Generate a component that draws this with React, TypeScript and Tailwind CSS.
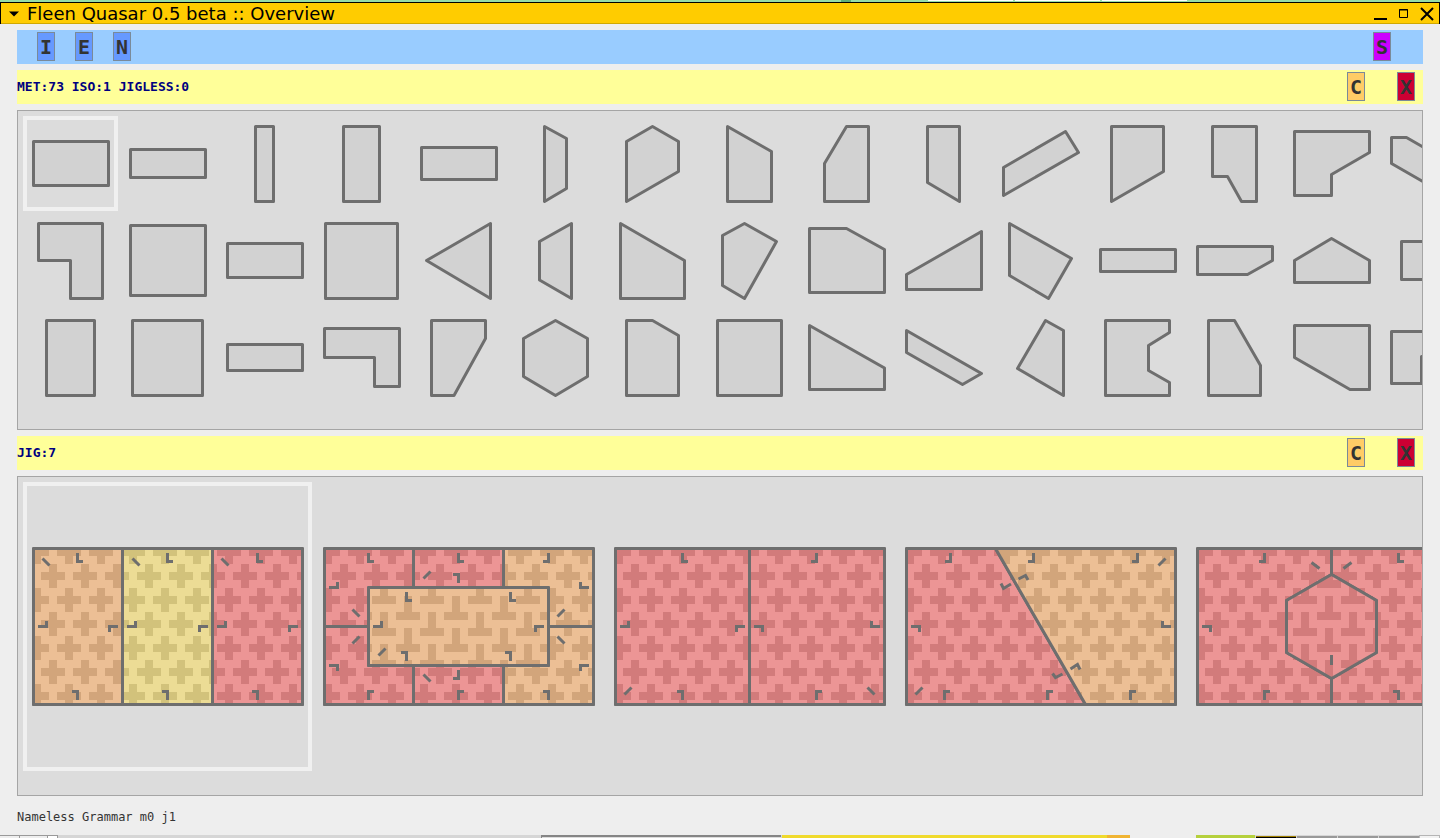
import { useState } from "react";
import type { ReactNode } from "react";

const METAGONS: string[] = [
  // first row
  "10.5,25.5 85.5,25.5 85.5,69.5 10.5,69.5",
  "10.5,33.5 85.5,33.5 85.5,61.5 10.5,61.5",
  "38.5,10.5 56.5,10.5 56.5,85.5 38.5,85.5",
  "29.5,10.5 65.5,10.5 65.5,85.5 29.5,85.5",
  "10.5,31.5 85.5,31.5 85.5,63.5 10.5,63.5",
  "36.5,10.5 58.5,22.5 58.5,72.5 36.5,85.5",
  "47.5,10.5 73.5,25.5 73.5,55.5 21.5,85.5 21.5,25.5",
  "25.5,10.5 69.5,35.5 69.5,85.5 25.5,85.5",
  "47.5,10.5 69.5,10.5 69.5,85.5 25.5,85.5 25.5,47.5",
  "31.5,10.5 63.5,10.5 63.5,85.5 31.5,66.5",
  "10.5,51.5 72.5,15.5 85.5,36.5 10.5,79.5",
  "21.5,10.5 73.5,10.5 73.5,55.5 21.5,85.5",
  "25.5,10.5 69.5,10.5 69.5,85.5 54.5,85.5 40.5,60.5 25.5,60.5",
  "10.5,15.5 85.5,15.5 85.5,36.5 47.5,58.5 47.5,79.5 10.5,79.5",
  "10.5,21.5 25.5,21.5 85.5,56 70.5,82 10.5,47.5",
  // second row
  "15.5,10.5 79.5,10.5 79.5,85.5 47.5,85.5 47.5,47.5 15.5,47.5",
  "10.5,12.5 85.5,12.5 85.5,82.5 10.5,82.5",
  "10.5,30.5 85.5,30.5 85.5,64.5 10.5,64.5",
  "11.5,10.5 83.5,10.5 83.5,85.5 11.5,85.5",
  "15.5,47.5 79.5,10.5 79.5,85.5",
  "63.5,10.5 63.5,85.5 31.5,67 31.5,28.5",
  "15.5,10.5 79.5,47.5 79.5,85.5 15.5,85.5",
  "42.5,10.5 74.5,28.5 42.5,85.5 20.5,72.5 20.5,22.5",
  "10.5,15.5 47.5,15.5 85.5,36.5 85.5,79.5 10.5,79.5",
  "10.5,61.5 85.5,18.5 85.5,76.5 10.5,76.5",
  "16.5,10.5 78.5,45.5 55.5,85.5 16.5,62.5",
  "10.5,36.5 85.5,36.5 85.5,58.5 10.5,58.5",
  "10.5,33.5 85.5,33.5 85.5,47.5 60.5,61.5 10.5,61.5",
  "47.5,25.5 85.5,47.5 85.5,69.5 10.5,69.5 10.5,47.5",
  "20.5,28.5 75.5,28.5 75.5,66.5 20.5,66.5",
  // third row
  "23.5,10.5 71.5,10.5 71.5,85.5 23.5,85.5",
  "12.5,10.5 82.5,10.5 82.5,85.5 12.5,85.5",
  "10.5,34.5 85.5,34.5 85.5,60.5 10.5,60.5",
  "10.5,18.5 85.5,18.5 85.5,76.5 60.5,76.5 60.5,47.5 10.5,47.5",
  "20.5,10.5 74.5,10.5 74.5,28.5 43,85.5 20.5,85.5",
  "47.5,10.5 79.5,28.5 79.5,66.5 47.5,85.5 15.5,66.5 15.5,28.5",
  "21.5,10.5 47.5,10.5 73.5,25.5 73.5,85.5 21.5,85.5",
  "15.5,10.5 79.5,10.5 79.5,85.5 15.5,85.5",
  "10.5,15.5 85.5,58 85.5,79.5 10.5,79.5",
  "10.5,20.5 85.5,63.5 66.5,74.5 10.5,42.5",
  "52.5,10.5 70.5,20.5 70.5,85.5 24.5,58.5",
  "15.5,10.5 79.5,10.5 79.5,22.5 58.5,35.5 58.5,60.5 79.5,72.5 79.5,85.5 15.5,85.5",
  "21.5,10.5 47.5,10.5 73.5,55.5 73.5,85.5 21.5,85.5",
  "10.5,15.5 85.5,15.5 85.5,79.5 66,79.5 10.5,47.5",
  "10.5,21.5 85.5,21.5 85.5,46.5 40.5,46.5 40.5,73.5 10.5,73.5",
];

type Cell = { points: string; fill: string };
type JigData = { cells: Cell[]; marks: string };

const FRAME = "10.5,66.5 279.5,66.5 279.5,222.5 10.5,222.5";

const JIGS: JigData[] = [
  {
    cells: [
      { points: "10.5,66.5 99.5,66.5 99.5,222.5 10.5,222.5", fill: "plus-orange" },
      { points: "99.5,66.5 189.5,66.5 189.5,222.5 99.5,222.5", fill: "plus-yellow" },
      { points: "189.5,66.5 279.5,66.5 279.5,222.5 189.5,222.5", fill: "plus-red" },
    ],
    marks:
      "M54.5 71v8.5h5.5M15 144.5h8.5v-5.5M95 144.5h-8.5v5.5M54.5 218v-8.5h-5.5M19.5 76.5l7 7" +
      "M144.5 71v8.5h5.5M104 144.5h8.5v-5.5M185 144.5h-8.5v5.5M144.5 218v-8.5h-5.5M109.5 76.5l7 7" +
      "M234.5 71v8.5h5.5M194 144.5h8.5v-5.5M275 144.5h-8.5v5.5M234.5 218v-8.5h-5.5M198.5 76.5l7 7",
  },
  {
    cells: [
      { points: "10.5,66.5 99.5,66.5 99.5,105.5 54.5,105.5 54.5,144.5 10.5,144.5", fill: "plus-red" },
      { points: "10.5,144.5 54.5,144.5 54.5,183.5 99.5,183.5 99.5,222.5 10.5,222.5", fill: "plus-red" },
      { points: "99.5,66.5 189.5,66.5 189.5,105.5 99.5,105.5", fill: "plus-red" },
      { points: "99.5,183.5 189.5,183.5 189.5,222.5 99.5,222.5", fill: "plus-red" },
      { points: "189.5,66.5 279.5,66.5 279.5,144.5 234.5,144.5 234.5,105.5 189.5,105.5", fill: "plus-orange" },
      { points: "234.5,144.5 279.5,144.5 279.5,222.5 189.5,222.5 189.5,183.5 234.5,183.5", fill: "plus-orange" },
      { points: "54.5,105.5 234.5,105.5 234.5,183.5 54.5,183.5", fill: "tee-orange" },
    ],
    marks:
      "M54.5 71v8.5h5.5M144.5 71v8.5h5.5M234.5 71v8.5h-5.5M15 105.5h8.5v-5.5M15 183.5h8.5v5.5" +
      "M275 105.5h-8.5v-5.5M275 183.5h-8.5v5.5M54.5 218v-8.5h5.5M144.5 218v-8.5h5.5M234.5 218v-8.5h-5.5" +
      "M144.5 101v-8.5h-5.5M144.5 188v8.5h-5.5M92.5 110v8.5h5.5M196.5 110v8.5h5.5M59 144.5h8.5v-5.5" +
      "M230 144.5h-8.5v5.5M92.5 179v-8.5h-5.5M196.5 179v-8.5h-5.5M109.5 96.5l7-7M38.5 127.5l7 7" +
      "M38.5 161.5l7-7M243.5 134.5l7-7M243.5 154.5l7 7M64.5 173.5l7-7M109.5 192.5l7 7",
  },
  {
    cells: [
      { points: "10.5,66.5 144.5,66.5 144.5,222.5 10.5,222.5", fill: "plus-red" },
      { points: "144.5,66.5 279.5,66.5 279.5,222.5 144.5,222.5", fill: "plus-red" },
    ],
    marks:
      "M77.5 71v8.5h5.5M211.5 71v8.5h-5.5M15 144.5h8.5v-5.5M140 144.5h-8.5v5.5M149 144.5h8.5v5.5" +
      "M275 144.5h-8.5v-5.5M77.5 218v-8.5h-5.5M211.5 218v-8.5h5.5M19.5 212.5l7-7M262.5 205.5l7 7",
  },
  {
    cells: [
      { points: "10.5,66.5 99.5,66.5 189.5,222.5 10.5,222.5", fill: "plus-red" },
      { points: "99.5,66.5 279.5,66.5 279.5,222.5 189.5,222.5", fill: "plus-orange" },
    ],
    marks:
      "M54.5 71v8.5h-5.5M137.5 71v8.5h-5.5M241.5 71v8.5h-5.5M15 144.5h8.5v5.5M275 144.5h-8.5v-5.5" +
      "M48.5 218v-8.5h5.5M151.5 218v-8.5h5.5M234.5 218v-8.5h5.5M19.5 212.5l7-7M262.5 83.5l7-7" +
      "M115 102l-7.5 4.5-2.5-5M122.5 97l7-3.5 2.5 4.5M166.5 192l-7 3.5-3-4M174.5 187l7-4.5 2.5 5",
  },
  {
    cells: [
      { points: "10.5,66.5 144.5,66.5 144.5,92.5 99.5,118.5 99.5,170.5 144.5,196.5 144.5,222.5 10.5,222.5", fill: "plus-red" },
      { points: "144.5,66.5 279.5,66.5 279.5,222.5 144.5,222.5 144.5,196.5 189.5,170.5 189.5,118.5 144.5,92.5", fill: "plus-red" },
      { points: "144.5,92.5 189.5,118.5 189.5,170.5 144.5,196.5 99.5,170.5 99.5,118.5", fill: "tee-red" },
    ],
    marks:
      "M77.5 71v8.5h-5.5M211.5 71v8.5h5.5M15 144.5h8.5v5.5M275 144.5h-8.5v5.5M77.5 218v-8.5h5.5" +
      "M211.5 218v-8.5h-5.5M124.5 80.5l8 6M156.5 86.5l8-6M144.5 173v10",
  },
];

const PALETTE = [
  { name: "orange", light: "#ecbf95", dark: "#d2a57b" },
  { name: "yellow", light: "#ecdc95", dark: "#d2c27b" },
  { name: "red", light: "#ec9595", dark: "#d27b7b" },
];

function Patterns() {
  return (
    <svg width="0" height="0" className="absolute" aria-hidden="true">
      <defs>
        {PALETTE.map((c) => (
          <pattern key={c.name} id={`plus-${c.name}`} patternUnits="userSpaceOnUse" x="14" y="82" width="32" height="48">
            <rect width="32" height="48" fill={c.light} />
            <path
              d="M12 0h8v8h8v8h-8v8h-8v-8h-8v-8h8zM0 24h4v8h8v8h-8v8h-4zM32 24h-4v8h-8v8h8v8h4z"
              fill={c.dark}
              shapeRendering="crispEdges"
            />
          </pattern>
        ))}
        {PALETTE.map((c) => (
          <pattern key={c.name} id={`tee-${c.name}`} patternUnits="userSpaceOnUse" x="34" y="146" width="48" height="32">
            <rect width="48" height="32" fill={c.light} />
            <path
              d="M8 0h8v16h8v8H0v-8h8zM24 0h24v8H24zM32 16h8v16h-8z"
              fill={c.dark}
              shapeRendering="crispEdges"
            />
          </pattern>
        ))}
      </defs>
    </svg>
  );
}

function KeyButton({ children, color }: { children: string; color: string }) {
  return (
    <button
      type="button"
      className={`flex h-[29px] w-[18px] shrink-0 items-center justify-center border border-[#7a8a99] text-xl leading-none font-bold text-[#333333] ${color}`}
    >
      {children}
    </button>
  );
}

function InfoBar({ text }: { text: string }) {
  return (
    <div className="flex h-[34px] shrink-0 items-center justify-between bg-[#ffff99] pr-2 pb-px">
      <h2 className="text-[13px] font-bold text-[#000080]">{text}</h2>
      <div className="flex gap-8">
        <KeyButton color="bg-[#ffcc66]">C</KeyButton>
        <KeyButton color="bg-[#cc0033]">X</KeyButton>
      </div>
    </div>
  );
}

function Panel({ children }: { children: ReactNode }) {
  return (
    <section className="min-h-[300px] flex-1 overflow-auto border border-[#a5a5a5] bg-[#dcdcdc] p-[5px] [scrollbar-width:none]">
      {children}
    </section>
  );
}

function TitleBar() {
  return (
    <header className="flex h-[22px] shrink-0 items-center justify-between border-x border-t border-black bg-[#ffcc00] pr-[5px] pl-2 text-black shadow-[inset_0_-1px_0_#d0a800]">
      <div className="flex items-center gap-2">
        <svg width="10" height="6" viewBox="0 0 10 6" aria-hidden="true">
          <path d="M0 0.5h10L5 5.5z" />
        </svg>
        <h1 className="font-['DejaVu_Sans',sans-serif] text-lg leading-5">Fleen Quasar 0.5 beta :: Overview</h1>
      </div>
      <div className="flex items-center gap-2.5">
        <button type="button" aria-label="Minimize">
          <svg width="14" height="14" viewBox="0 0 14 14">
            <path d="M0 12h13" stroke="#000" strokeWidth="2" />
          </svg>
        </button>
        <button type="button" aria-label="Maximize">
          <svg width="12" height="14" viewBox="0 0 12 14">
            <path d="M1.5 2.5h8v8h-8zM1 3h9" stroke="#000" fill="none" />
          </svg>
        </button>
        <button type="button" aria-label="Close">
          <svg width="14" height="14" viewBox="0 0 14 14">
            <path d="M1 1l12 12M13 1L1 13" stroke="#000" strokeWidth="2" />
          </svg>
        </button>
      </div>
    </header>
  );
}

function DesktopTop() {
  return (
    <div className="flex h-0.5 shrink-0 bg-[#97dca8] pr-[253px] pl-[841px]">
      <div className="w-2.5 bg-[#5fae79]" />
      <div className="ml-auto flex h-px gap-0.5">
        <div className="w-[85px] bg-white" />
        <div className="w-[85px] bg-white" />
        <div className="w-[85px] bg-white" />
      </div>
    </div>
  );
}

function Taskbar() {
  return (
    <footer className="flex h-[3px] shrink-0 bg-[#d6d6d6]">
      <div className="w-5 border-t border-r border-[#999999] bg-[#eeeeee]" />
      <div className="w-7 border-t border-r border-[#999999] bg-[#eeeeee]" />
      <div className="w-2.5 border-t border-r border-[#999999] bg-white" />
      <div className="flex-1 bg-[#d6d6d6]" />
      <div className="mr-px w-60 border-t-2 border-l border-[#858585] bg-[#dcdcdc]" />
      <div className="w-[325px] bg-[#f0da2c]" />
      <div className="w-[23px] bg-[#f0b432]" />
      <div className="w-[66px] bg-[#eeeeee]" />
      <div className="w-[59px] bg-[#b5d03c]" />
      <div className="flex gap-px border-t border-[#d6d6d6] pl-px">
        <div className="w-10 border-t border-[#a08000] bg-black" />
        <div className="w-10 bg-[#999999]" />
        <div className="w-10 bg-[#999999]" />
        <div className="w-10 bg-[#999999]" />
      </div>
      <div className="w-[21px] border border-b-0 border-[#b5b5b5] bg-[#f2f2f2]" />
    </footer>
  );
}

export default function App() {
  const [metagon, setMetagon] = useState(0);
  const [jig, setJig] = useState(0);

  return (
    <div className="flex min-h-screen flex-col bg-[#eeeeee] font-['DejaVu_Sans_Mono',monospace]">
      <Patterns />
      <DesktopTop />
      <TitleBar />
      <main className="flex flex-1 flex-col gap-1.5 px-[17px] pt-1.5">
        <nav className="flex h-[34px] shrink-0 items-center justify-between bg-[#99ccff] pr-8 pb-px pl-5">
          <div className="flex gap-5">
            <KeyButton color="bg-[#6699ff]">I</KeyButton>
            <KeyButton color="bg-[#6699ff]">E</KeyButton>
            <KeyButton color="bg-[#6699ff]">N</KeyButton>
          </div>
          <KeyButton color="bg-[#cc00ff]">S</KeyButton>
        </nav>

        <InfoBar text="MET:73 ISO:1 JIGLESS:0" />
        <Panel>
          <div className="grid w-max grid-cols-[repeat(15,95px)] gap-0.5">
            {METAGONS.map((points, i) => (
              <button
                key={i}
                type="button"
                aria-label={`Metagon ${i}`}
                aria-pressed={i === metagon}
                onClick={() => setMetagon(i)}
                className={`size-[95px] border-4 ${i === metagon ? "border-[#f0f0f0]" : "border-transparent"}`}
              >
                <svg width="87" height="87" viewBox="4 4 87 87" className="block">
                  <polygon points={points} fill="#d2d2d2" stroke="#6e6e6e" strokeWidth="3" strokeLinejoin="round" />
                </svg>
              </button>
            ))}
          </div>
        </Panel>

        <InfoBar text="JIG:7" />
        <Panel>
          <div className="flex w-max gap-0.5">
            {JIGS.map((j, i) => (
              <button
                key={i}
                type="button"
                aria-label={`Jig ${i + 1}`}
                aria-pressed={i === jig}
                onClick={() => setJig(i)}
                className={`size-[289px] shrink-0 border-4 ${i === jig ? "border-[#f0f0f0]" : "border-transparent"}`}
              >
                <svg width="281" height="281" viewBox="4 4 281 281" className="block">
                  <g stroke="#6e6e6e" strokeWidth="3" strokeLinejoin="round">
                    {j.cells.map((c) => (
                      <polygon key={c.points} points={c.points} fill={`url(#${c.fill})`} />
                    ))}
                    <polygon points={FRAME} fill="none" />
                    <path d={j.marks} fill="none" strokeLinejoin="miter" />
                  </g>
                </svg>
              </button>
            ))}
          </div>
        </Panel>
      </main>
      <p className="flex h-[39px] shrink-0 items-center px-[17px] pt-0.5 text-xs text-[#333333]">
        Nameless Grammar m{metagon} j{jig + 1}
      </p>
      <Taskbar />
    </div>
  );
}
